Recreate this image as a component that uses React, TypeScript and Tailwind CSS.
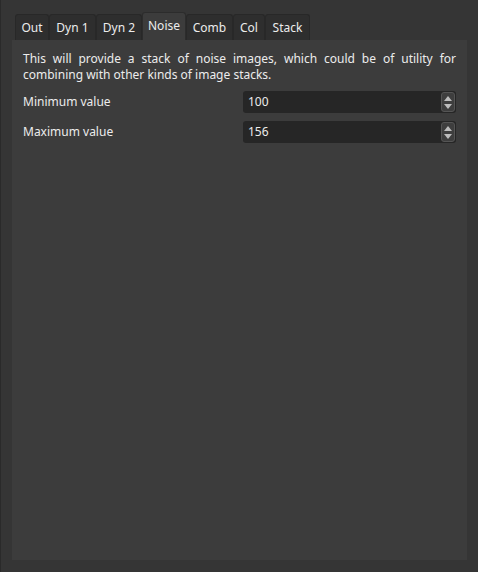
import React from "react";

const tabs = [
  { label: "Out", w: "w-[34px]" },
  { label: "Dyn 1", w: "w-[47px]" },
  { label: "Dyn 2", w: "w-[46px]" },
  { label: "Noise", w: "w-[44px]", active: true },
  { label: "Comb", w: "w-[47px]" },
  { label: "Col", w: "w-[32px]" },
  { label: "Stack", w: "w-[45px]" },
];

function SpinBox({ value }: { value: string }) {
  return (
    <div className="w-[213px] h-[22px] bg-[#262626] rounded-[3px] flex items-center justify-between pl-[5px] pr-[1px]">
      <span>{value}</span>
      <div className="w-[14px] h-[20px] bg-[#3e3e3e] border border-[#555] rounded-[3px] flex flex-col items-center justify-center gap-[3px]">
        <svg width="8" height="5" viewBox="0 0 8 5">
          <path d="M4 0 L8 5 L0 5 Z" fill="#bdbdbd" />
        </svg>
        <svg width="8" height="5" viewBox="0 0 8 5">
          <path d="M0 0 L8 0 L4 5 Z" fill="#bdbdbd" />
        </svg>
      </div>
    </div>
  );
}

export default function App() {
  return (
    <div
      className="w-[478px] h-[572px] bg-[#353535] border-l border-[#2a2a2a] flex flex-col pl-[11px] pr-[11px] pt-[12px] pb-[12px] text-[12px] text-[#ececec]"
      style={{ fontFamily: '"Noto Sans", "Open Sans", sans-serif' }}
    >
      <div className="flex items-end pl-[3px] h-[28px]">
        {tabs.map((t) =>
          t.active ? (
            <div
              key={t.label}
              className={`${t.w} h-[28px] bg-[#3c3c3c] border border-b-0 border-[#2c2c2c] rounded-t-[3px] flex items-center justify-center pb-[2px]`}
            >
              {t.label}
            </div>
          ) : (
            <div
              key={t.label}
              className={`${t.w} h-[26px] bg-[#2e2e2e] border border-b-0 border-[#282828] rounded-t-[3px] flex items-center justify-center`}
            >
              {t.label}
            </div>
          )
        )}
      </div>
      <div className="flex-1 bg-[#3c3c3c] px-[11px] pt-[11px]">
        <p className="text-justify leading-[16px] mb-[8px]">
          This will provide a stack of noise images, which could be of utility for combining with other kinds of image stacks.
        </p>
        <div className="flex items-center justify-between h-[22px] mb-[8px]">
          <span>Minimum value</span>
          <SpinBox value="100" />
        </div>
        <div className="flex items-center justify-between h-[22px]">
          <span>Maximum value</span>
          <SpinBox value="156" />
        </div>
      </div>
    </div>
  );
}
